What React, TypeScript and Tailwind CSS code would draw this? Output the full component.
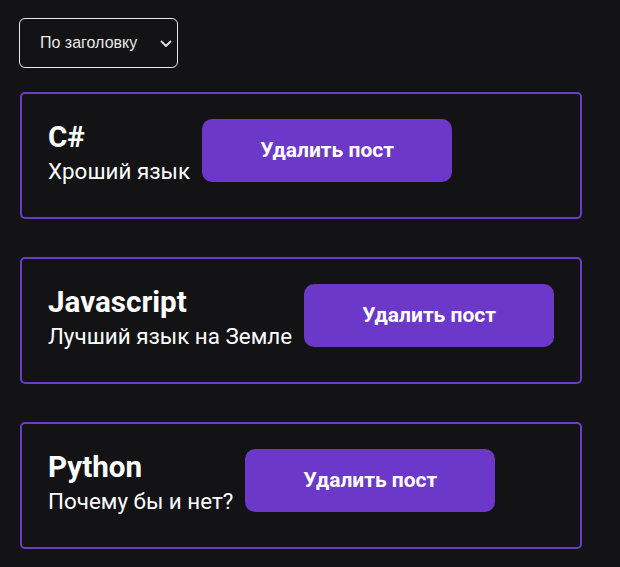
import React from "react";

const posts = [
  { title: "C#", body: "Хроший язык" },
  { title: "Javascript", body: "Лучший язык на Земле" },
  { title: "Python", body: "Почему бы и нет?" },
];

export default function App() {
  return (
    <div className="min-h-[567px] w-[620px] bg-[#131316] pl-[19px] pt-[18px]" style={{ fontFamily: "Roboto, sans-serif" }}>
      <div className="relative flex h-[50px] w-[159px] items-center rounded-[6px] border border-[#e8e8e8] pl-[20px]">
        <span className="text-[16px] text-[#e8e8e8]" style={{ fontFamily: '"Liberation Sans", Arial, sans-serif' }}>
          По заголовку
        </span>
        <svg className="absolute left-[140px] top-[21px]" width="12" height="8" viewBox="0 0 12 8" fill="none">
          <path d="M1.5 1.5 L6 6 L10.5 1.5" stroke="#e0e0e0" strokeWidth="1.8" strokeLinecap="round" strokeLinejoin="round" />
        </svg>
      </div>
      <div className="mt-[24px] flex flex-col gap-[38px] pl-[1px]">
        {posts.map((p) => (
          <div key={p.title} className="flex h-[127px] w-[562px] items-start gap-[12px] rounded-[5px] border-2 border-[#6c3bc9] pl-[26px] pt-[25px]">
            <div className="flex flex-col text-white">
              <div className="text-[29.6px] font-bold leading-[36px]">{p.title}</div>
              <div className="mt-[3px] text-[22.4px] leading-[26px]">{p.body}</div>
            </div>
            <button className="h-[63px] w-[250px] rounded-[10px] bg-[#6c38c9] text-[21px] font-bold text-white">
              Удалить пост
            </button>
          </div>
        ))}
      </div>
    </div>
  );
}
